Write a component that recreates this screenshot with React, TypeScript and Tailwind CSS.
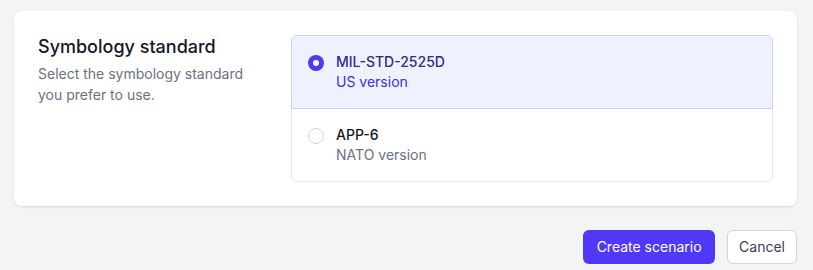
import React, { useState } from 'react';

const options = [
  { id: 'mil', name: 'MIL-STD-2525D', description: 'US version' },
  { id: 'app6', name: 'APP-6', description: 'NATO version' },
];

const App: React.FC = () => {
  const [selected, setSelected] = useState('mil');

  return (
    <div className="min-h-screen bg-[#f3f4f6] pl-[14px] pr-4 pt-[11px] font-['Inter',sans-serif]">
      <div className="w-[783px]">
        <div className="rounded-lg bg-white p-6 shadow-[0_1px_3px_rgba(0,0,0,0.08),0_1px_2px_rgba(0,0,0,0.04)]">
          <div className="grid grid-cols-3 gap-6">
            <div>
              <h3 className="text-lg leading-6 font-medium text-gray-900">Symbology standard</h3>
              <p className="mt-1 text-sm leading-[21px] text-gray-500">
                Select the symbology standard you prefer to use.
              </p>
            </div>
            <div className="col-span-2">
              <div className="rounded-md">
                {options.map((opt, i) => {
                  const checked = selected === opt.id;
                  return (
                    <label
                      key={opt.id}
                      onClick={() => setSelected(opt.id)}
                      className={`relative flex cursor-pointer border p-4 ${
                        i === 0 ? 'rounded-tl-md rounded-tr-md' : 'rounded-bl-md rounded-br-md -mt-px'
                      } ${checked ? 'z-10 border-indigo-200 bg-indigo-50' : 'border-gray-200 bg-white'}`}
                    >
                      <span
                        className={`mt-[3px] flex h-4 w-4 shrink-0 items-center justify-center rounded-full ${
                          checked ? 'bg-indigo-600' : 'border border-gray-300 bg-white'
                        }`}
                      >
                        {checked && <span className="h-1.5 w-1.5 rounded-full bg-white" />}
                      </span>
                      <span className="ml-3 flex flex-col">
                        <span
                          className={`text-sm leading-5 font-medium ${
                            checked ? 'text-indigo-900' : 'text-gray-900'
                          }`}
                        >
                          {opt.name}
                        </span>
                        <span className={`text-sm leading-5 ${checked ? 'text-indigo-700' : 'text-gray-500'}`}>
                          {opt.description}
                        </span>
                      </span>
                    </label>
                  );
                })}
              </div>
            </div>
          </div>
        </div>

        <div className="mt-6 flex justify-end">
          <button className="h-[34px] rounded-md bg-indigo-600 px-[13.5px] text-sm text-white">
            Create scenario
          </button>
          <button className="ml-3 h-[34px] rounded-md border border-gray-300 bg-white px-[11px] text-sm text-gray-700">
            Cancel
          </button>
        </div>
      </div>
    </div>
  );
};

export default App;
